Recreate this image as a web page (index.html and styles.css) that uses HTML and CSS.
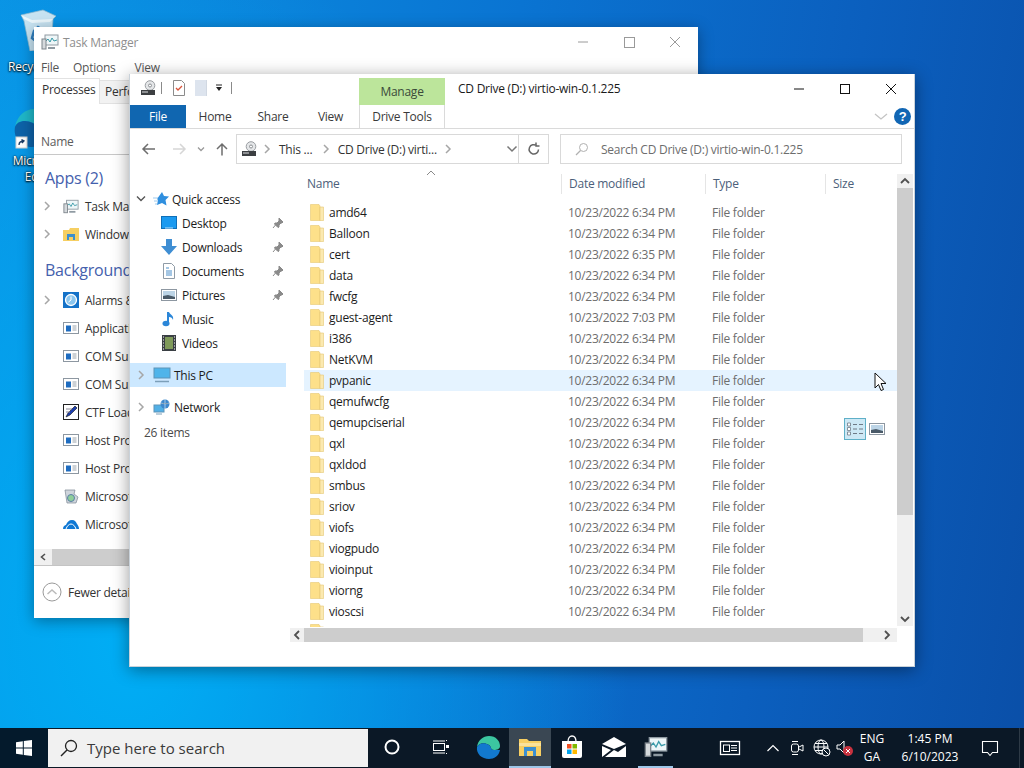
FILE: index.html
```html
<!DOCTYPE html>
<html lang="en">
<head>
    <meta charset="UTF-8">
    <title>Desktop</title>
    <link rel="stylesheet" href="styles.css">
</head>
<body>
<svg class="defs" width="0" height="0">
    <symbol id="folder" viewBox="0 0 14 17">
        <path d="M.5 .5h8.5l1 1.5v14.5h-9.500z" fill="#fde08a" stroke="#e6c873" stroke-width=".6"/>
        <path d="M10 3h3.500v13.500h-3.500z" fill="#fbe9b0" stroke="#e6c873" stroke-width=".6"/>
    </symbol>
    <symbol id="chev" viewBox="0 0 8 10">
        <path d="M2 1l4 4-4 4" fill="none" stroke="#a6a6a6" stroke-width="1.500"/>
    </symbol>
    <symbol id="pin" viewBox="0 0 12 12">
        <path d="M7 1l4 4-1 1-1 0-2 2 0 2-1 .5-3.500-3.500.5-1 2 0 2-2 0-1zM3.500 8l-2.500 3" fill="#8a8a8a" stroke="#8a8a8a"/>
    </symbol>
    <symbol id="service" viewBox="0 0 16 12">
        <rect x=".5" y=".5" width="15" height="11" fill="#fff" stroke="#8d97a1"/>
        <rect x="3" y="3.500" width="5" height="6" fill="#1e6cc0"/>
        <path d="M9.500 4h4M9.500 6h4M9.500 8h4" stroke="#9aa4ad"/>
    </symbol>
    <symbol id="taskmgr" viewBox="0 0 18 16">
        <rect x="4" y="1" width="13" height="10" fill="#eef6f8" stroke="#8f9aa2"/>
        <path d="M5 7l2-2 2 3 2-4 2 3 3-1" fill="none" stroke="#3a9aa8"/>
        <rect x="1" y="5" width="4" height="10" fill="#d5d9dc" stroke="#7d858c"/>
        <path d="M7 14h7" stroke="#8f9aa2" stroke-width="2"/>
    </symbol>
    <symbol id="drive" viewBox="0 0 16 16">
        <circle cx="10" cy="5.500" r="4.800" fill="#e4e6e8" stroke="#9a9ea2"/>
        <circle cx="10" cy="5.500" r="1.500" fill="#fff" stroke="#8a8e92"/>
        <rect x="1" y="10" width="14" height="5" fill="#3c3f42"/>
        <rect x="2" y="11.500" width="6" height="1" fill="#dfe1e3"/>
    </symbol>
</svg>

<div class="desk-icon recycle">
    <svg width="40" height="42" viewBox="0 0 40 42">
        <path d="M3 6l22-5 13 6-3 3-2 30-21 2-6-30z" fill="#c7e3f2" stroke="#8fb7cc" stroke-width=".7"/>
        <path d="M3 6l11 5 21-1-3 3-18 1-8-4z" fill="#eaf6fb"/>
        <path d="M20 18l6 4-2 5 2 4-7 2-5-4 2-7z" fill="none" stroke="#2e7fc0" stroke-width="2.500"/>
    </svg>
    <span>Recycle Bin</span>
</div>
<div class="desk-icon edge">
    <svg width="40" height="44" viewBox="0 0 40 44">
        <path d="M3 20C5 8 14 2 22 2c9 0 16 6 17 15 0 5-5 7-10 7-6 0-3-5-8-8C13 12 5 14 3 20z" fill="#1fb7c8"/>
        <path d="M3 20c2-6 10-8 18-4 5 3 2 8 8 8l8 0c-2 10-9 16-17 16C9 40 1 31 3 20z" fill="#0d62a8"/>
        <rect x="4" y="30" width="11" height="11" fill="#fff" stroke="#d0d0d0"/>
        <path d="M7 38c0-3 2-4 5-4M9.500 32.500l2.500 1.500-2 2" fill="none" stroke="#1a3c66" stroke-width="1.300"/>
    </svg>
    <span>Microsoft Edge</span>
</div>

<section class="window taskman">
    <header class="tm-title">
        <svg class="tm-title-icon" width="18" height="16"><use href="#taskmgr"/></svg>
        <span>Task Manager</span>
        <div class="tm-controls">
            <svg width="46" height="12" viewBox="0 0 46 12"><path d="M18 6h10" stroke="#9a9a9a"/></svg>
            <svg width="46" height="12" viewBox="0 0 46 12"><rect x="18.500" y="1.500" width="10" height="10" fill="none" stroke="#9a9a9a"/></svg>
            <svg width="46" height="12" viewBox="0 0 46 12"><path d="M18 1l10 10M28 1L18 11" stroke="#9a9a9a"/></svg>
        </div>
    </header>
    <nav class="tm-menu"><span>File</span><span>Options</span><span>View</span></nav>
    <div class="tm-tabs">
        <span class="tm-tab active">Processes</span>
        <span class="tm-tab">Performance</span>
    </div>
    <div class="tm-head">Name</div>
    <div class="tm-body">
        <h2 class="tm-group">Apps (2)</h2>
        <div class="tm-row"><svg class="chev" width="8" height="10"><use href="#chev"/></svg><svg class="tm-icon" width="16" height="15"><use href="#taskmgr"/></svg>Task Manager</div>
        <div class="tm-row"><svg class="chev" width="8" height="10"><use href="#chev"/></svg>
            <svg class="tm-icon" width="16" height="15" viewBox="0 0 16 15"><path d="M0 3h6l1-2h9v13H0z" fill="#f6cf62"/><rect x="4" y="7" width="8" height="6" fill="#3d8fce"/><rect x="6" y="10" width="4" height="3" fill="#f6cf62"/></svg>Windows Explorer</div>
        <h2 class="tm-group gap">Background processes (25)</h2>
        <div class="tm-row"><svg class="chev" width="8" height="10"><use href="#chev"/></svg>
            <svg class="tm-icon" width="16" height="16" viewBox="0 0 16 16"><rect width="16" height="16" fill="#1472c8"/><circle cx="8" cy="8" r="5.500" fill="#8cc6ee" stroke="#fff" stroke-width="1.300"/><path d="M8 4.500V8l-2.500 2" stroke="#fff" fill="none"/></svg>Alarms &amp; Clock</div>
        <div class="tm-row"><i class="chev-slot"></i><svg class="tm-icon" width="16" height="12"><use href="#service"/></svg>Application Frame Host</div>
        <div class="tm-row"><i class="chev-slot"></i><svg class="tm-icon" width="16" height="12"><use href="#service"/></svg>COM Surrogate</div>
        <div class="tm-row"><i class="chev-slot"></i><svg class="tm-icon" width="16" height="12"><use href="#service"/></svg>COM Surrogate</div>
        <div class="tm-row"><i class="chev-slot"></i>
            <svg class="tm-icon" width="16" height="16" viewBox="0 0 16 16"><rect x=".5" y=".5" width="15" height="15" fill="#fff" stroke="#222"/><path d="M3 13l2-4 7-7 2 2-7 7z" fill="#1d3fae" stroke="#111" stroke-width=".6"/><path d="M3 8h4M3 5h6" stroke="#889"/></svg>CTF Loader</div>
        <div class="tm-row"><i class="chev-slot"></i><svg class="tm-icon" width="16" height="12"><use href="#service"/></svg>Host Process for Windows Tasks</div>
        <div class="tm-row"><i class="chev-slot"></i><svg class="tm-icon" width="16" height="12"><use href="#service"/></svg>Host Process for Windows Tasks</div>
        <div class="tm-row"><i class="chev-slot"></i>
            <svg class="tm-icon" width="16" height="16" viewBox="0 0 16 16"><path d="M2 2h10l-1 4 4 3-2 6H4z" fill="#cfd5dc" stroke="#7b8794" stroke-width=".7"/><circle cx="8" cy="10" r="3.500" fill="#8fce9a" stroke="#5b7fa8"/></svg>Microsoft Distributed Transaction</div>
        <div class="tm-row"><i class="chev-slot"></i>
            <svg class="tm-icon" width="16" height="11" viewBox="0 0 16 11"><path d="M0 10c0-3 2-4 3-4 1-3 3-5 6-5 3 0 4 2 5 4 1 1 2 3 2 5z" fill="#0f78d4"/><path d="M3 10c1-3 3-5 5-5s4 2 5 5" fill="none" stroke="#fff"/></svg>Microsoft OneDrive</div>
    </div>
    <div class="tm-scroll"><span class="scroll-btn">
        <svg width="8" height="8" viewBox="0 0 8 8"><path d="M6 1L2.500 4 6 7" fill="none" stroke="#505050" stroke-width="1.600"/></svg></span><span class="tm-thumb"></span></div>
    <footer class="tm-foot">
        <svg width="20" height="20" viewBox="0 0 20 20"><circle cx="10" cy="10" r="9" fill="#fff" stroke="#9a9a9a"/><path d="M5.500 12L10 8l4.500 4" fill="none" stroke="#bbb" stroke-width="1.500"/></svg>
        <span>Fewer details</span>
    </footer>
</section>

<section class="window explorer">
    <header class="ex-title">
        <div class="qat">
            <svg class="qat-drive" width="16" height="16"><use href="#drive"/></svg>
            <i class="qat-sep"></i>
            <svg class="qat-props" width="12" height="16" viewBox="0 0 12 16"><path d="M.5 .5h8l3 3v12h-11z" fill="#fff" stroke="#8b8b8b"/><path d="M3 8l2 2 4-4" fill="none" stroke="#d8543a" stroke-width="1.300"/></svg>
            <svg class="qat-new" width="12" height="16" viewBox="0 0 12 16"><rect width="12" height="16" fill="#dde4ee"/><path d="M12 0v16" stroke="#c5ccd6"/></svg>
            <svg class="qat-drop" width="8" height="8" viewBox="0 0 8 8"><path d="M1 1h6" stroke="#222"/><path d="M1 3h6L4 7z" fill="#222"/></svg>
            <i class="qat-sep last"></i>
        </div>
        <div class="manage">Manage</div>
        <div class="ex-caption">CD Drive (D:) virtio-win-0.1.225</div>
        <div class="ex-controls">
            <svg width="46" height="12" viewBox="0 0 46 12"><path d="M18 6h10" stroke="#111"/></svg>
            <svg width="46" height="12" viewBox="0 0 46 12"><rect x="18.500" y="1.500" width="9" height="9" fill="none" stroke="#111"/></svg>
            <svg width="46" height="12" viewBox="0 0 46 12"><path d="M18 1l10 10M28 1L18 11" stroke="#111"/></svg>
        </div>
    </header>
    <nav class="ribbon">
        <span class="rb-tab file">File</span>
        <span class="rb-tab">Home</span>
        <span class="rb-tab">Share</span>
        <span class="rb-tab view">View</span>
        <span class="rb-tab tools">Drive Tools</span>
        <div class="rb-right">
            <svg width="14" height="8" viewBox="0 0 14 8"><path d="M1 1l6 5 6-5" fill="none" stroke="#c4c4c4" stroke-width="1.300"/></svg>
            <svg class="help" width="17" height="17" viewBox="0 0 17 17"><circle cx="8.500" cy="8.500" r="8.500" fill="#1166b4"/><text x="8.500" y="13" text-anchor="middle" class="help-mark">?</text></svg>
        </div>
    </nav>
    <div class="addr-row">
        <svg class="ab back" width="30" height="14" viewBox="0 0 30 14"><path d="M21 7H9M14 2L9 7l5 5" fill="none" stroke="#6e6e6e" stroke-width="1.500"/></svg>
        <svg class="ab" width="30" height="14" viewBox="0 0 30 14"><path d="M9 7h12M16 2l5 5-5 5" fill="none" stroke="#d6d6d6" stroke-width="1.500"/></svg>
        <svg class="ab" width="14" height="14" viewBox="0 0 14 14"><path d="M4 5.500l3 3 3-3" fill="none" stroke="#9a9a9a" stroke-width="1.300"/></svg>
        <svg class="ab" width="28" height="14" viewBox="0 0 28 14"><path d="M14 13.500V2M9 7l5-5 5 5" fill="none" stroke="#6e6e6e" stroke-width="1.500"/></svg>
        <div class="addr">
            <svg class="addr-drive" width="16" height="16"><use href="#drive"/></svg>
            <svg class="crumb-chev" width="8" height="10"><use href="#chev"/></svg>
            <span class="crumb pc">This ...</span>
            <svg class="crumb-chev" width="8" height="10"><use href="#chev"/></svg>
            <span class="crumb cd">CD Drive (D:) virti...</span>
            <svg class="crumb-chev" width="8" height="10"><use href="#chev"/></svg>
            <svg class="addr-drop" width="12" height="8" viewBox="0 0 12 8"><path d="M1.500 1.500L6 6l4.500-4.500" fill="none" stroke="#777" stroke-width="1.500"/></svg>
            <div class="refresh"><svg width="14" height="14" viewBox="0 0 14 14"><path d="M11.500 7.500a4.700 4.700 0 1 1-2-4M9 .5v3.500h3.500" fill="none" stroke="#666" stroke-width="1.500"/></svg></div>
        </div>
        <div class="search">
            <svg width="14" height="14" viewBox="0 0 14 14"><circle cx="8.500" cy="5.500" r="4" fill="none" stroke="#b0b0b0"/><path d="M5.500 8.500L1 13" stroke="#b0b0b0" stroke-width="1.300"/></svg>
            <span>Search CD Drive (D:) virtio-win-0.1.225</span>
        </div>
    </div>
    <div class="ex-main">
        <aside class="nav">
            <div class="nav-row first">
                <svg class="nav-chev" width="10" height="8" viewBox="0 0 10 8"><path d="M1 1.500l4 4 4-4" fill="none" stroke="#555" stroke-width="1.400"/></svg>
                <svg class="nav-icon" width="16" height="16" viewBox="0 0 16 16"><path d="M9 1l2 4 5 .5-3.500 3.500 1 5.500L9 12l-5 2 1-5-1-1z" fill="#2f8fdf"/><path d="M0 7h5M1 10h4M2 13h2" stroke="#9cc9ee"/></svg>
                <span>Quick access</span>
            </div>
            <div class="nav-row sub">
                <svg class="nav-icon" width="16" height="14" viewBox="0 0 16 14"><rect x=".5" y=".5" width="15" height="12" fill="#1b9af0" stroke="#0f6fb8"/><path d="M4 12h8" stroke="#bfe0f7"/></svg>
                <span>Desktop</span><svg class="pin" width="12" height="12"><use href="#pin"/></svg>
            </div>
            <div class="nav-row sub">
                <svg class="nav-icon" width="16" height="16" viewBox="0 0 16 16"><path d="M5 0h6v7h5l-8 9-8-9h5z" fill="#3f8ed3"/></svg>
                <span>Downloads</span><svg class="pin" width="12" height="12"><use href="#pin"/></svg>
            </div>
            <div class="nav-row sub">
                <svg class="nav-icon" width="14" height="16" viewBox="0 0 14 16"><path d="M1.500 .5h8l3 3v12h-11z" fill="#fff" stroke="#8f9ba6"/><path d="M4 5h3M4 8h6M4 10h6M4 12h6" stroke="#4b8ec9"/></svg>
                <span>Documents</span><svg class="pin" width="12" height="12"><use href="#pin"/></svg>
            </div>
            <div class="nav-row sub">
                <svg class="nav-icon" width="16" height="12" viewBox="0 0 16 12"><rect x=".5" y=".5" width="15" height="11" fill="#fff" stroke="#8d97a1"/><rect x="2" y="2" width="12" height="8" fill="#bcd4e6"/><path d="M2 10V7l5-1 7 2v2z" fill="#4a5a68"/></svg>
                <span>Pictures</span><svg class="pin" width="12" height="12"><use href="#pin"/></svg>
            </div>
            <div class="nav-row sub">
                <svg class="nav-icon" width="14" height="16" viewBox="0 0 14 16"><path d="M6 1v11" stroke="#2b86d8" stroke-width="2"/><ellipse cx="4" cy="12.500" rx="3.500" ry="2.800" fill="#2b86d8"/><path d="M7 1c1 3 5 3 4 8-.5-2-2-3-4-3z" fill="#2b86d8"/></svg>
                <span>Music</span>
            </div>
            <div class="nav-row sub">
                <svg class="nav-icon" width="14" height="16" viewBox="0 0 14 16"><rect width="14" height="16" fill="#3a3f44"/><rect x="3" y="2" width="8" height="12" fill="#7f9a5a"/><path d="M1 2h1M1 5h1M1 8h1M1 11h1M1 14h1M12 2h1M12 5h1M12 8h1M12 11h1M12 14h1" stroke="#fff"/></svg>
                <span>Videos</span>
            </div>
            <div class="nav-row selected">
                <svg class="nav-chev" width="8" height="10"><use href="#chev"/></svg>
                <svg class="nav-icon" width="18" height="16" viewBox="0 0 18 16"><rect x="1" y="1" width="16" height="10" fill="#4fb4ea" stroke="#5c93b8"/><path d="M2 14.500h14" stroke="#7c9fb8" stroke-width="1.500"/></svg>
                <span>This PC</span>
            </div>
            <div class="nav-row net">
                <svg class="nav-chev" width="8" height="10"><use href="#chev"/></svg>
                <svg class="nav-icon" width="18" height="16" viewBox="0 0 18 16"><rect x="1" y="6" width="10" height="7" fill="#52b0e6" stroke="#5c93b8"/><circle cx="12" cy="5" r="4.500" fill="#3f88cc"/><path d="M8 4c3 1 6 1 8 0M12 .5v9" stroke="#cfe6f6" stroke-width=".7"/><path d="M3 15h6" stroke="#7c9fb8"/></svg>
                <span>Network</span>
            </div>
        </aside>
        <div class="content">
            <div class="files-wrap">
                <div class="files">
                    <svg class="sort-caret" width="10" height="6" viewBox="0 0 10 6"><path d="M1 5l4-4 4 4" fill="none" stroke="#8a8a8a"/></svg>
                    <div class="file-head">
                        <span>Name</span><span>Date modified</span><span>Type</span><span>Size</span>
                    </div>
                    <div class="file-row"><span class="fname"><svg width="14" height="17"><use href="#folder"/></svg>amd64</span><span>10/23/2022 6:34 PM</span><span>File folder</span></div>
                    <div class="file-row"><span class="fname"><svg width="14" height="17"><use href="#folder"/></svg>Balloon</span><span>10/23/2022 6:34 PM</span><span>File folder</span></div>
                    <div class="file-row"><span class="fname"><svg width="14" height="17"><use href="#folder"/></svg>cert</span><span>10/23/2022 6:35 PM</span><span>File folder</span></div>
                    <div class="file-row"><span class="fname"><svg width="14" height="17"><use href="#folder"/></svg>data</span><span>10/23/2022 6:34 PM</span><span>File folder</span></div>
                    <div class="file-row"><span class="fname"><svg width="14" height="17"><use href="#folder"/></svg>fwcfg</span><span>10/23/2022 6:34 PM</span><span>File folder</span></div>
                    <div class="file-row"><span class="fname"><svg width="14" height="17"><use href="#folder"/></svg>guest-agent</span><span>10/23/2022 7:03 PM</span><span>File folder</span></div>
                    <div class="file-row"><span class="fname"><svg width="14" height="17"><use href="#folder"/></svg>i386</span><span>10/23/2022 6:34 PM</span><span>File folder</span></div>
                    <div class="file-row"><span class="fname"><svg width="14" height="17"><use href="#folder"/></svg>NetKVM</span><span>10/23/2022 6:34 PM</span><span>File folder</span></div>
                    <div class="file-row hover"><span class="fname"><svg width="14" height="17"><use href="#folder"/></svg>pvpanic</span><span>10/23/2022 6:34 PM</span><span>File folder</span></div>
                    <div class="file-row"><span class="fname"><svg width="14" height="17"><use href="#folder"/></svg>qemufwcfg</span><span>10/23/2022 6:34 PM</span><span>File folder</span></div>
                    <div class="file-row"><span class="fname"><svg width="14" height="17"><use href="#folder"/></svg>qemupciserial</span><span>10/23/2022 6:34 PM</span><span>File folder</span></div>
                    <div class="file-row"><span class="fname"><svg width="14" height="17"><use href="#folder"/></svg>qxl</span><span>10/23/2022 6:34 PM</span><span>File folder</span></div>
                    <div class="file-row"><span class="fname"><svg width="14" height="17"><use href="#folder"/></svg>qxldod</span><span>10/23/2022 6:34 PM</span><span>File folder</span></div>
                    <div class="file-row"><span class="fname"><svg width="14" height="17"><use href="#folder"/></svg>smbus</span><span>10/23/2022 6:34 PM</span><span>File folder</span></div>
                    <div class="file-row"><span class="fname"><svg width="14" height="17"><use href="#folder"/></svg>sriov</span><span>10/23/2022 6:34 PM</span><span>File folder</span></div>
                    <div class="file-row"><span class="fname"><svg width="14" height="17"><use href="#folder"/></svg>viofs</span><span>10/23/2022 6:34 PM</span><span>File folder</span></div>
                    <div class="file-row"><span class="fname"><svg width="14" height="17"><use href="#folder"/></svg>viogpudo</span><span>10/23/2022 6:34 PM</span><span>File folder</span></div>
                    <div class="file-row"><span class="fname"><svg width="14" height="17"><use href="#folder"/></svg>vioinput</span><span>10/23/2022 6:34 PM</span><span>File folder</span></div>
                    <div class="file-row"><span class="fname"><svg width="14" height="17"><use href="#folder"/></svg>viorng</span><span>10/23/2022 6:34 PM</span><span>File folder</span></div>
                    <div class="file-row"><span class="fname"><svg width="14" height="17"><use href="#folder"/></svg>vioscsi</span><span>10/23/2022 6:34 PM</span><span>File folder</span></div>
                    <div class="file-row"><span class="fname"><svg width="14" height="17"><use href="#folder"/></svg></span></div>
                </div>
                <div class="vscroll">
                    <svg width="16" height="14" viewBox="0 0 16 14"><path d="M4 9l4-4 4 4" fill="none" stroke="#505050" stroke-width="1.800"/></svg>
                    <div class="vtrack"><div class="vthumb"></div></div>
                    <svg width="16" height="14" viewBox="0 0 16 14"><path d="M4 5l4 4 4-4" fill="none" stroke="#505050" stroke-width="1.800"/></svg>
                </div>
            </div>
            <div class="hscroll">
                <svg width="14" height="14" viewBox="0 0 14 14"><path d="M9 3L5 7l4 4" fill="none" stroke="#505050" stroke-width="1.800"/></svg>
                <div class="hthumb"></div>
                <svg class="hright" width="14" height="14" viewBox="0 0 14 14"><path d="M5 3l4 4-4 4" fill="none" stroke="#505050" stroke-width="1.800"/></svg>
            </div>
        </div>
    </div>
    <footer class="ex-status">
        <span>26 items</span>
        <div class="views">
            <span class="view-btn on"><svg width="18" height="14" viewBox="0 0 18 14"><path d="M1.500 1h3v3h-3zM1.500 5.500h3v3h-3zM1.500 10h3v3h-3z" fill="#fff" stroke="#6e7a86" stroke-width=".8"/><path d="M7 2.500h4M13 2.500h4M7 7h4M13 7h4M7 11.500h4M13 11.500h4" stroke="#6e7a86"/></svg></span>
            <span class="view-btn"><svg width="16" height="12"><use href="#service-pic"/></svg><svg width="16" height="12" viewBox="0 0 16 12" class="pic"><rect x=".5" y=".5" width="15" height="11" fill="#fff" stroke="#8d97a1"/><rect x="2" y="2" width="12" height="8" fill="#bcd4e6"/><path d="M2 10V7l5-1 7 2v2z" fill="#4a5a68"/></svg></span>
        </div>
    </footer>
</section>

<svg class="cursor" width="14" height="20" viewBox="0 0 14 20"><path d="M1 1v15l3.500-3.500 2.500 6 2.500-1-2.500-6h5z" fill="#fff" stroke="#111"/></svg>

<footer class="taskbar">
    <div class="start">
        <svg width="16" height="16" viewBox="0 0 16 16"><path d="M0 2.200l6.800-1v6.400H0zM7.800 1l8.200-1v7.600H7.800zM0 8.500h6.800v6.300L0 13.800zM7.800 8.500H16V16l-8.200-1.100z" fill="#fff"/></svg>
    </div>
    <div class="tb-search">
        <svg width="18" height="18" viewBox="0 0 18 18"><circle cx="11" cy="7" r="5.500" fill="none" stroke="#222" stroke-width="1.300"/><path d="M7 11l-6 6" stroke="#222" stroke-width="1.500"/></svg>
        <span>Type here to search</span>
    </div>
    <div class="tb-btn wide"><svg width="16" height="16" viewBox="0 0 16 16"><circle cx="8" cy="8" r="6.500" fill="none" stroke="#fff" stroke-width="2"/></svg></div>
    <div class="tb-btn wide"><svg width="18" height="18" viewBox="0 0 18 18"><path d="M2 3h12M2 15h12M15.500 2v1M15.500 15v1" stroke="#fff"/><rect x="2.500" y="5.500" width="11" height="7" fill="none" stroke="#fff"/><rect x="15" y="7" width="3" height="3" fill="#fff"/></svg></div>
    <div class="tb-btn">
        <svg width="25" height="25" viewBox="0 0 25 25"><path d="M1 12C2 5 7 1 13 1c7 0 11 5 11 10 0 3-3 4-6 4-4 0-2-3-5-5C8 7 3 8 1 12z" fill="#3cc6a0"/><path d="M1 12c2-4 7-5 12-2 3 2 1 5 5 5h6c-1 6-6 9-11 9C6 24 0 19 1 12z" fill="#1279cf"/></svg>
    </div>
    <div class="tb-btn active">
        <svg width="22" height="18" viewBox="0 0 22 18"><path d="M0 1h8l2 2h12v15H0z" fill="#f8cf62"/><rect y="5" width="22" height="3" fill="#fbe29a"/><rect x="5" y="9" width="12" height="9" fill="#3c8fd0"/><rect x="8" y="13" width="6" height="5" fill="#f8cf62"/></svg>
    </div>
    <div class="tb-btn">
        <svg width="22" height="24" viewBox="0 0 22 24"><path d="M7 7c0-8 8-8 8 0" fill="none" stroke="#fff" stroke-width="1.300"/><path d="M1 6h20v15a2 2 0 0 1-2 2H3a2 2 0 0 1-2-2z" fill="#fff"/><rect x="6" y="9" width="4.500" height="4.500" fill="#f25022"/><rect x="11.500" y="9" width="4.500" height="4.500" fill="#7fba00"/><rect x="6" y="14.500" width="4.500" height="4.500" fill="#00a4ef"/><rect x="11.500" y="14.500" width="4.500" height="4.500" fill="#ffb900"/></svg>
    </div>
    <div class="tb-btn">
        <svg width="24" height="20" viewBox="0 0 24 20"><path d="M0 7L12 0l12 7-12 5z" fill="#fff"/><path d="M0 9l9 4-9 7zM24 9v11H3l9-7 4 2z" fill="#fff"/></svg>
    </div>
    <div class="tb-btn running">
        <svg width="24" height="22" viewBox="0 0 18 16"><use href="#taskmgr"/></svg>
    </div>
    <div class="tray">
        <svg class="t-news" width="24" height="18" viewBox="0 0 24 18"><rect x="2.500" y="2.500" width="19" height="13" fill="none" stroke="#fff" stroke-width="1.300"/><rect x="5.500" y="6" width="6" height="6.500" fill="none" stroke="#fff"/><path d="M13 6.500h6M13 9h6M13 11.500h6" stroke="#fff"/></svg>
        <svg class="t-up" width="14" height="8" viewBox="0 0 14 8"><path d="M1.500 7L7 1.500 12.500 7" fill="none" stroke="#fff" stroke-width="1.200"/></svg>
        <svg class="t-meet" width="14" height="18" viewBox="0 0 14 18"><rect x="1.500" y="5" width="7" height="8" rx="2" fill="none" stroke="#fff"/><path d="M9 8l4-2v6l-4-2M2 2.500h6M2 15.500h6" fill="none" stroke="#fff"/></svg>
        <svg class="t-globe" width="18" height="18" viewBox="0 0 18 18"><circle cx="8" cy="8" r="7" fill="none" stroke="#fff"/><ellipse cx="8" cy="8" rx="3" ry="7" fill="none" stroke="#fff"/><path d="M1 8h14M2 4.500h12M2 11.500h12" stroke="#fff"/><circle cx="13" cy="13" r="4" fill="#0b1a28" stroke="#fff"/><path d="M10.500 10.500l5 5" stroke="#fff"/></svg>
        <svg class="t-sound" width="18" height="18" viewBox="0 0 18 18"><path d="M1 6h3l4-4v12L4 10H1z" fill="none" stroke="#fff"/><circle cx="12" cy="12" r="5" fill="#c8323f"/><path d="M10 10l4 4M14 10l-4 4" stroke="#fff"/></svg>
        <div class="t-lang"><span>ENG</span><span>GA</span></div>
        <div class="t-clock"><span>1:45 PM</span><span>6/10/2023</span></div>
        <svg class="t-notes" width="18" height="18" viewBox="0 0 18 18"><path d="M1.500 2.500h15v11h-5L9 16.500 6.500 13.500h-5z" fill="none" stroke="#fff" stroke-width="1.100"/></svg>
        <i class="t-show"></i>
    </div>
</footer>
</body>
</html>
```

FILE: styles.css
```css
* {
    margin: 0;
    padding: 0;
    box-sizing: border-box;
}

html, body {
    width: 1024px;
    height: 768px;
    overflow: hidden;
}

body {
    position: relative;
    font-family: "Open Sans", "Liberation Sans", sans-serif;
    font-size: 12px;
    letter-spacing: -0.25px;
    color: #1c1c1c;
    background:
        radial-gradient(ellipse 500px 700px at 130px 640px, #00aef5 0%, rgba(0, 170, 240, 0) 100%),
        linear-gradient(100deg, #0a93e4 0%, #0a74d2 45%, #0b5fbe 75%, #0a4fa8 100%);
}

svg {
    display: block;
    flex: none;
}

.defs {
    position: absolute;
}

/* desktop icons */
.desk-icon {
    position: absolute;
    left: 0;
    width: 76px;
    display: flex;
    flex-direction: column;
    align-items: center;
    color: #fff;
    text-align: center;
    line-height: 16px;
    text-shadow: 0 0 2px #000, 0 1px 2px #000;
}

.recycle {
    top: 9px;
}

.recycle svg {
    margin-bottom: 8px;
}

.edge {
    top: 107px;
}

.edge svg {
    margin-left: -12px;
    margin-bottom: 2px;
}

.edge span {
    width: 70px;
}

/* windows */
.window {
    position: absolute;
    background: #fff;
    overflow: hidden;
    display: flex;
    flex-direction: column;
}

.taskman {
    left: 34px;
    top: 27px;
    width: 664px;
    height: 591px;
    color: #333;
    box-shadow: 0 3px 14px rgba(0, 0, 0, .35);
}

.explorer {
    left: 129px;
    top: 74px;
    width: 786px;
    height: 593px;
    border: 1px solid #c9d2da;
    border-top: 0;
    box-shadow: 0 3px 16px rgba(0, 0, 0, .4);
}

/* task manager */
.tm-title {
    height: 30px;
    flex: none;
    display: flex;
    align-items: center;
    padding-left: 7px;
    color: #8e8e8e;
}

.tm-title-icon {
    margin-right: 4px;
}

.tm-controls {
    margin-left: auto;
    display: flex;
    margin-right: 0;
}

.tm-menu {
    height: 21px;
    flex: none;
    display: flex;
    align-items: center;
    gap: 14px;
    padding-left: 7px;
    color: #555;
}

.tm-menu span:last-child {
    margin-left: 5px;
}

.tm-tabs {
    height: 26px;
    flex: none;
    display: flex;
}

.tm-tab {
    padding: 2px 7px 0 8px;
    background: #f2f2f2;
    border: 1px solid #e2e2e2;
    border-left: 0;
    height: 26px;
    margin-top: 0;
}

.tm-tab.active {
    background: #fff;
    width: 66px;
    border-bottom: 0;
}

.tm-tab:not(.active) {
    padding-left: 5px;
    height: 24px;
    margin-top: 2px;
}

.tm-head {
    height: 51px;
    flex: none;
    display: flex;
    align-items: flex-end;
    padding: 0 0 4px 7px;
    border-bottom: 1px solid #c8c8c8;
    color: #5c5c5c;
}

.tm-body {
    height: 394px;
    flex: none;
    padding-top: 9px;
}

.tm-group {
    height: 28px;
    font-size: 16px;
    font-weight: 400;
    line-height: 28px;
    padding-left: 11px;
    color: #4460ad;
    white-space: nowrap;
}

.tm-group.gap {
    margin-top: 8px;
    margin-bottom: 2px;
}

.tm-row {
    height: 28px;
    display: flex;
    align-items: center;
    white-space: nowrap;
}

.chev {
    margin-left: 9px;
    width: 8px;
}

.chev-slot {
    width: 17px;
    flex: none;
}

.tm-icon {
    margin: 0 6px 0 12px;
}

.tm-scroll {
    height: 16px;
    flex: none;
    display: flex;
    background: #f0f0f0;
    border-bottom: 1px solid #c4c4c4;
    height: 17px;
}

.scroll-btn {
    width: 18px;
    display: flex;
    align-items: center;
    justify-content: center;
}

.tm-thumb {
    width: 120px;
    background: #cdcdcd;
}

.tm-foot {
    flex: 1;
    display: flex;
    align-items: center;
    gap: 6px;
    padding: 0 0 0 8px;
    color: #333;
}

/* explorer title */
.ex-title {
    height: 31px;
    flex: none;
    display: flex;
}

.qat {
    width: 229px;
    display: flex;
    align-items: center;
    padding-bottom: 3px;
}

.qat-drive {
    margin-left: 10px;
}

.qat-sep {
    width: 1px;
    height: 12px;
    background: #8a8a8a;
    margin-left: 5px;
}

.qat-props {
    margin-left: 11px;
}

.qat-new {
    margin-left: 10px;
}

.qat-drop {
    margin-left: 8px;
}

.qat-sep.last {
    margin-left: 8px;
}

.manage {
    width: 86px;
    height: 27px;
    margin-top: 4px;
    background: #bce59b;
    text-align: center;
    line-height: 28px;
    color: #3a4a3a;
}

.ex-caption {
    margin-left: 13px;
    line-height: 30px;
    color: #1a1a1a;
}

.ex-controls {
    margin-left: auto;
    display: flex;
    align-items: center;
    padding-bottom: 1px;
    padding-right: 0;
}

/* ribbon */
.ribbon {
    height: 24px;
    flex: none;
    display: flex;
    border-bottom: 1px solid #dadada;
    color: #3a3a3a;
}

.rb-tab {
    width: 58px;
    text-align: center;
    line-height: 23px;
}

.rb-tab.file {
    width: 56px;
    background: #1066b0;
    color: #fff;
}

.rb-tab.view {
    width: 57px;
}

.rb-tab.tools {
    width: 86px;
    border-left: 1px solid #dadada;
    border-right: 1px solid #dadada;
}

.rb-right {
    margin-left: auto;
    display: flex;
    align-items: center;
    gap: 6px;
    padding-right: 3px;
}

.help-mark {
    font-family: "Liberation Sans", sans-serif;
    font-size: 13px;
    font-weight: 700;
    fill: #fff;
}

/* address bar */
.addr-row {
    height: 41px;
    flex: none;
    display: flex;
    align-items: flex-start;
    padding: 5px 12px 0 4px;
}

.ab {
    margin-top: 8px;
}

.addr {
    width: 313px;
    height: 30px;
    margin-left: 0;
    border: 1px solid #d9d9d9;
    display: flex;
    align-items: center;
    color: #333;
}

.addr-drive {
    margin-left: 4px;
}

.crumb-chev {
    margin-left: 6px;
}

.crumb {
    margin-left: 8px;
    white-space: nowrap;
}

.crumb.pc {
    width: 38px;
}

.crumb.cd {
    width: 104px;
}

.addr-drop {
    margin-left: 54px;
}

.refresh {
    margin-left: auto;
    width: 31px;
    height: 100%;
    border-left: 1px solid #d9d9d9;
    display: flex;
    align-items: center;
    justify-content: center;
}

.search {
    margin-left: 11px;
    width: 343px;
    height: 30px;
    border: 1px solid #d9d9d9;
    display: flex;
    align-items: center;
    padding-left: 14px;
    gap: 12px;
    color: #6d6d6d;
}

/* nav pane */
.ex-main {
    flex: 1;
    min-height: 0;
    display: flex;
}

.nav {
    width: 160px;
    flex: none;
    padding-top: 17px;
}

.nav-row {
    width: 156px;
    height: 24px;
    display: flex;
    align-items: center;
    padding-left: 6px;
    white-space: nowrap;
    color: #1c1c1c;
}

.nav-chev {
    width: 10px;
}

.nav-row .nav-icon {
    margin-left: 7px;
    margin-right: 3px;
}

.nav-row.sub {
    padding-left: 31px;
}

.nav-row.sub .nav-icon {
    margin: 0 5px 0 0;
    width: 16px;
}

.pin {
    margin-left: auto;
    margin-right: 2px;
}

.nav-row.selected {
    margin-top: 8px;
    background: #cce8ff;
}

.nav-row.net {
    margin-top: 8px;
}

/* file list */
.content {
    flex: 1;
    min-width: 0;
    display: flex;
    flex-direction: column;
}

.files-wrap {
    flex: none;
    height: 457px;
    display: flex;
}

.files {
    position: relative;
    width: 607px;
    flex: none;
    padding: 4px 0 0 14px;
    overflow: hidden;
}

.sort-caret {
    position: absolute;
    left: 136px;
    top: 0;
}

.file-head {
    display: grid;
    grid-template-columns: 257px 144px 120px 72px;
    height: 20px;
    margin-bottom: 8px;
    line-height: 20px;
    color: #4c607a;
}

.file-head span {
    padding-left: 7px;
    border-left: 1px solid #e5e5e5;
}

.file-head span:first-child {
    padding-left: 3px;
    border-left: 0;
}

.file-row {
    display: grid;
    grid-template-columns: 257px 144px 120px 72px;
    height: 21px;
    line-height: 21px;
    color: #6d6d6d;
}

.file-row span {
    padding-left: 7px;
}

.file-row.hover {
    background: #e5f3ff;
}

.file-row .fname {
    display: flex;
    align-items: center;
    gap: 5px;
    padding-left: 6px;
    color: #1c1c1c;
}

.vscroll {
    width: 16px;
    margin-top: 4px;
    height: 452px;
    background: #f0f0f0;
    display: flex;
    flex-direction: column;
}

.vtrack {
    flex: 1;
}

.vthumb {
    height: 327px;
    background: #cdcdcd;
}

.hscroll {
    height: 14px;
    margin-top: 1px;
    margin-right: 17px;
    background: #f0f0f0;
    display: flex;
}

.hthumb {
    width: 559px;
    background: #cdcdcd;
}

.hright {
    margin-left: auto;
    margin-right: 3px;
}

/* status bar */
.ex-status {
    flex: 1;
    display: flex;
    align-items: flex-start;
    padding: 5px 15px 0 14px;
    line-height: 24px;
    color: #4a4a4a;
}

.views {
    margin-left: auto;
    display: flex;
    margin-top: -3px;
    margin-right: 11px;
}

.view-btn {
    width: 22px;
    height: 22px;
    display: flex;
    align-items: center;
    justify-content: center;
}

.view-btn svg:not(.pic):empty {
    display: none;
}

.view-btn svg:first-child:not(:last-child) {
    display: none;
}

.view-btn.on {
    background: #cde8f5;
    border: 1px solid #5fb0c8;
}

/* mouse pointer */
.cursor {
    position: absolute;
    left: 874px;
    top: 372px;
}

/* taskbar */
.taskbar {
    position: absolute;
    left: 0;
    right: 0;
    bottom: 0;
    height: 40px;
    display: flex;
    background: #0b1826;
    color: #fff;
}

.start {
    width: 48px;
    background: #041a2c;
    display: flex;
    align-items: center;
    justify-content: center;
}

.tb-search {
    width: 320px;
    height: 38px;
    margin-top: 1px;
    background: #f1f1f1;
    display: flex;
    align-items: center;
    padding-left: 12px;
    gap: 9px;
    font-size: 15px;
    letter-spacing: 0;
    color: #3a3a3a;
}

.tb-btn {
    width: 42px;
    display: flex;
    align-items: center;
    justify-content: center;
    border-bottom: 2px solid transparent;
}

.tb-btn.wide {
    width: 48px;
}

.tb-btn.wide + .tb-btn:not(.wide) {
    margin-left: 3px;
}

.tb-btn.active {
    background: #3a4753;
    border-bottom-color: #9dc6e8;
}

.tb-btn.running {
    border-image: linear-gradient(to right, transparent 4px, #9dc6e8 4px, #9dc6e8 37px, transparent 37px) 1;
}

.tray {
    margin-left: auto;
    display: flex;
    align-items: center;
}

.t-news {
    margin-right: 24px;
}

.t-up {
    margin-right: 10px;
}

.t-meet {
    margin-right: 9px;
}

.t-globe {
    margin-right: 5px;
}

.t-lang,
.t-clock {
    display: flex;
    flex-direction: column;
    align-items: center;
    line-height: 18px;
    letter-spacing: 0;
}

.t-lang {
    width: 28px;
    margin-left: 4px;
}

.t-clock {
    width: 82px;
    margin-left: 3px;
}

.t-notes {
    margin-left: 10px;
}

.t-show {
    width: 1px;
    height: 40px;
    margin-left: 20px;
    margin-right: 4px;
    background: #2e3a46;
}
```
